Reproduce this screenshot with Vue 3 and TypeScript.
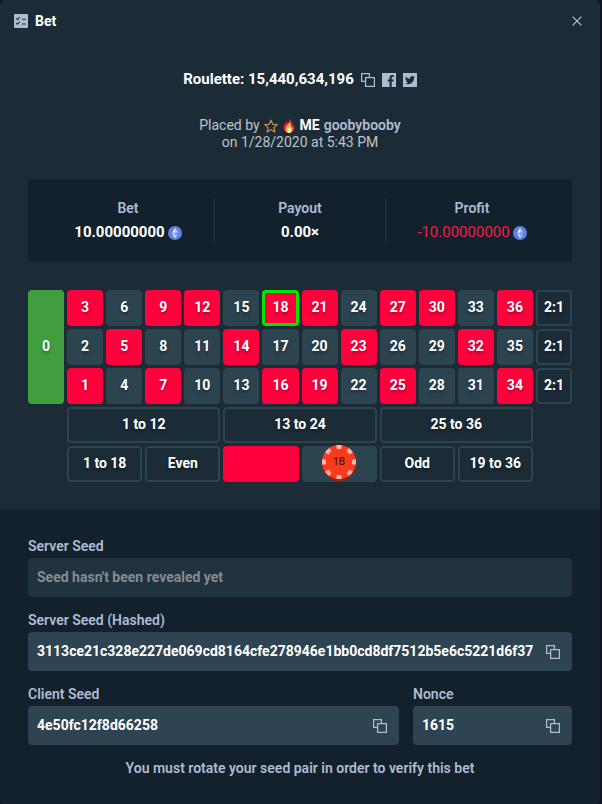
<script setup lang="ts">
import { defineComponent, h } from 'vue'

type Tone = 'red' | 'black'

interface Cell {
  n: number
  tone: Tone
  won: boolean
}

const reds = new Set([1, 3, 5, 7, 9, 12, 14, 16, 18, 19, 21, 23, 25, 27, 30, 32, 34, 36])
const result = 18

const rows: Cell[][] = [3, 2, 1].map((start) =>
  Array.from({ length: 12 }, (_, i) => {
    const n = start + i * 3
    return { n, tone: reds.has(n) ? 'red' : 'black', won: n === result } as Cell
  }),
)

const dozens = ['1 to 12', '13 to 24', '25 to 36']

const CopyIcon = defineComponent({
  render: () =>
    h('svg', { viewBox: '0 0 14 14', width: 14, height: 14, fill: 'none', stroke: 'currentColor', 'stroke-width': 1.25, 'aria-hidden': 'true' }, [
      h('path', { d: 'M4 8.4H.6V.6h7.800V4' }),
      h('rect', { x: 4.6, y: 4.6, width: 8.8, height: 8.8 }),
    ]),
})

const EthIcon = defineComponent({
  render: () =>
    h('svg', { viewBox: '0 0 32 32', width: 14, height: 14, 'aria-hidden': 'true' }, [
      h('circle', { cx: 16, cy: 16, r: 16, fill: '#627eea' }),
      h('path', { d: 'M16.5 4v8.9l7.5 3.3z', fill: '#fff', 'fill-opacity': 0.6 }),
      h('path', { d: 'M16.5 4 9 16.2l7.5-3.3z', fill: '#fff' }),
      h('path', { d: 'M16.5 22v6L24 17.6z', fill: '#fff', 'fill-opacity': 0.6 }),
      h('path', { d: 'M16.5 28v-6L9 17.6z', fill: '#fff' }),
      h('path', { d: 'm16.5 20.6 7.5-4.4-7.5-3.3z', fill: '#fff', 'fill-opacity': 0.2 }),
      h('path', { d: 'm9 16.2 7.5 4.4v-7.7z', fill: '#fff', 'fill-opacity': 0.6 }),
    ]),
})
</script>

<template>
  <main class="modal">
    <header class="head">
      <svg class="muted" viewBox="0 0 14 14" width="14" height="14" aria-hidden="true">
        <rect width="14" height="14" rx="1" fill="currentColor" />
        <path d="M2.2 4.3l1.3 1.3 2.3-2.6M2.2 9l1.3 1.3 2.3-2.6M7.8 5.2h4M7.8 10h4" fill="none" stroke="#1b2c37" stroke-width="1.1" />
      </svg>
      <h1>Bet</h1>
      <button class="icon close" aria-label="Close">
        <svg viewBox="0 0 10 10" width="10" height="10" fill="none" stroke="currentColor" stroke-width="1.3" aria-hidden="true">
          <path d="M.6.6l8.8 8.8M9.4.6L.6 9.4" />
        </svg>
      </button>
    </header>

    <section class="body">
      <div class="title">
        <h2>Roulette: 15,440,634,196</h2>
        <button class="icon" aria-label="Copy bet"><CopyIcon /></button>
        <a class="icon" href="#facebook" aria-label="Facebook">
          <svg viewBox="0 0 14 14" width="14" height="14" aria-hidden="true">
            <path fill="currentColor" d="M0 0h14v14H9.7V8.6h1.8l.3-2.1H9.7V5.1c0-.6.2-1 1-1h1.1V2.2c-.2 0-.9-.1-1.6-.1-1.6 0-2.7 1-2.7 2.8v1.6H5.7v2.1h1.8V14H0z" />
          </svg>
        </a>
        <a class="icon" href="#twitter" aria-label="Twitter">
          <svg viewBox="0 0 14 14" width="14" height="14" aria-hidden="true">
            <rect width="14" height="14" fill="currentColor" />
            <path fill="#1b2c37" d="M12 4.1c-.4.2-.8.3-1.2.3.4-.2.7-.6.9-1.1-.4.2-.8.4-1.3.5a2.05 2.05 0 0 0-3.5 1.9C5.2 5.6 3.7 4.8 2.7 3.5c-.5.9-.3 2.1.6 2.7-.3 0-.6-.1-.9-.2 0 1 .7 1.8 1.6 2-.3.1-.6.1-.9 0 .3.8 1 1.4 1.9 1.4-.9.7-1.9 1-3 .9 3.7 2.3 9-.1 9-5.2.4-.3.8-.7 1-1z" />
          </svg>
        </a>
      </div>

      <p class="placed">
        <span class="who">
          Placed by
          <svg viewBox="0 0 24 24" width="14" height="14" aria-hidden="true">
            <path d="M12 2l3 7 7.6.7-5.7 5 1.7 7.5L12 18.200l-6.600 4 1.700-7.500-5.700-5L9 9z" fill="none" stroke="#d9984f" stroke-width="1.9" stroke-linejoin="round" />
          </svg>
          <svg viewBox="0 0 14 14" width="14" height="14" aria-hidden="true">
            <path d="M7.3 0c.6 2-.6 3-1.7 4.3-.5-.3-.7-.8-.6-1.5C3 4.3 1.5 6.7 1.6 9.2 1.7 12 4 14 7 14s5.4-2 5.4-4.9c0-1.7-.5-2.9-1.2-3.9 0 .7-.2 1.2-.7 1.5C10.6 4.2 9.6 1.5 7.3 0z" fill="#e8203a" />
            <path d="M7.4 3.2c.2 1.6-3.7 3.4-3.7 6.6C3.7 12.4 5.2 14 7 14s3.7-1.4 3.700-3.900c0-1-.3-1.700-.7-2.300-.2.5-.5.8-.9.9.2-2.200-.3-4.200-1.700-5.500z" fill="#ffb636" />
            <path d="M7.2 7.5c0 1.2-1.8 2.2-1.8 4 0 1.5.7 2.5 1.7 2.500s1.900-.8 1.900-2.300c0-1.700-.9-3-1.800-4.200z" fill="#fff6c4" />
          </svg>
          <b>ME</b>
          <a href="#goobybooby">goobybooby</a>
        </span>
        <span>on 1/28/2020 at 5:43 PM</span>
      </p>

      <dl class="stats">
        <div>
          <dt>Bet</dt>
          <dd>10.00000000 <EthIcon /></dd>
        </div>
        <div>
          <dt>Payout</dt>
          <dd>0.00×</dd>
        </div>
        <div>
          <dt>Profit</dt>
          <dd class="loss">-10.00000000 <EthIcon /></dd>
        </div>
      </dl>

      <div class="board">
        <button class="cell zero">0</button>
        <template v-for="(row, r) in rows" :key="r">
          <button v-for="c in row" :key="c.n" class="cell" :class="[c.tone, { won: c.won }]">{{ c.n }}</button>
          <button class="cell line">2:1</button>
        </template>
        <button v-for="(d, i) in dozens" :key="d" class="cell line dozen" :class="{ first: i === 0 }">{{ d }}</button>
        <button class="cell line half first">1 to 18</button>
        <button class="cell line half">Even</button>
        <button class="cell red half" aria-label="Red"></button>
        <button class="cell black half" aria-label="Black">
          <svg class="chip" viewBox="0 0 34 36" width="34" height="36">
            <circle cx="17" cy="19" r="17" fill="#a81f08" />
            <circle cx="17" cy="17" r="17" fill="#fb3a1b" />
            <circle cx="17" cy="17" r="15" fill="none" stroke="#fdb5ab" stroke-width="4" pathLength="80" stroke-dasharray="4.4 5.6" stroke-dashoffset="2.2" />
            <text x="17" y="20" text-anchor="middle">1B</text>
          </svg>
        </button>
        <button class="cell line half">Odd</button>
        <button class="cell line half">19 to 36</button>
      </div>
    </section>

    <section class="seeds">
      <div class="field off">
        <label for="server">Server Seed</label>
        <div class="box"><input id="server" value="Seed hasn't been revealed yet" disabled /></div>
      </div>
      <div class="field">
        <label for="hashed">Server Seed (Hashed)</label>
        <div class="box">
          <input id="hashed" value="3113ce21c328e227de069cd8164cfe278946e1bb0cd8df7512b5e6c5221d6f37" readonly />
          <button class="icon" aria-label="Copy hashed server seed"><CopyIcon /></button>
        </div>
      </div>
      <div class="pair">
        <div class="field">
          <label for="client">Client Seed</label>
          <div class="box">
            <input id="client" value="4e50fc12f8d66258" readonly />
            <button class="icon" aria-label="Copy client seed"><CopyIcon /></button>
          </div>
        </div>
        <div class="field">
          <label for="nonce">Nonce</label>
          <div class="box">
            <input id="nonce" value="1615" readonly />
            <button class="icon" aria-label="Copy nonce"><CopyIcon /></button>
          </div>
        </div>
      </div>
      <p class="note">You must rotate your seed pair in order to verify this bet</p>
    </section>
  </main>
</template>

<style>
body {
  background: #10131f;
}
</style>

<style scoped>
.modal {
  margin-right: 2px;
  border-radius: 5px;
  overflow: hidden;
  background: #1b2c37;
  color: #fff;
  font: 14px/17px Roboto, 'Liberation Sans', sans-serif;
}
.modal * {
  box-sizing: border-box;
}
h1,
h2,
p,
dl,
dd {
  margin: 0;
}
button,
input {
  font: inherit;
  color: inherit;
  border: 0;
  padding: 0;
  background: none;
}
svg {
  display: block;
  flex: none;
}
.muted,
.icon {
  color: #b1bad3;
}
.icon {
  display: flex;
}
.head {
  display: flex;
  align-items: center;
  gap: 7px;
  height: 42px;
  padding: 0 18px 0 14px;
}
h1 {
  font-size: 14px;
  font-weight: 700;
}
.close {
  margin-left: auto;
}
.body {
  display: flex;
  flex-direction: column;
  gap: 28px;
  padding: 28px;
}
.title {
  display: flex;
  align-items: center;
  justify-content: center;
  gap: 7px;
}
h2 {
  font-size: 15px;
  line-height: 19px;
  font-weight: 700;
}
.placed {
  display: flex;
  flex-direction: column;
  align-items: center;
  color: #bfc3c6;
}
.who {
  display: flex;
  align-items: center;
  gap: 4px;
}
.who b {
  color: #fff;
}
.who a {
  color: #b1bad3;
  font-weight: 600;
  text-decoration: none;
}
.stats {
  display: grid;
  grid-template-columns: repeat(3, 1fr);
  padding: 19px 14px;
  border-radius: 3px;
  background: #12212b;
  text-align: center;
}
.stats > div {
  display: flex;
  flex-direction: column;
  gap: 7px;
  padding: 2px 0;
}
.stats > div + div {
  box-shadow: -1px 0 #1b2c37, inset 1px 0 #1b2c37;
}
dt {
  color: #b1bad3;
  font-weight: 600;
}
dd {
  display: flex;
  align-items: center;
  justify-content: center;
  gap: 3px;
  font-size: 15px;
  font-weight: 700;
}
.loss {
  color: #f0204a;
  font-weight: 400;
}
.board {
  display: grid;
  grid-template-columns: repeat(14, minmax(0, 1fr));
  grid-auto-rows: 36px;
  gap: 3px;
}
.cell {
  display: flex;
  align-items: center;
  justify-content: center;
  padding-bottom: 2px;
  border-radius: 4px;
  font-weight: 700;
  text-shadow: 0 2px 3px rgba(0, 0, 0, 0.35);
}
.zero {
  grid-row: span 3;
  background: #419e3f;
}
.red {
  background: #ff003d;
}
.black {
  background: #2c4350;
}
.won {
  border: 3px solid #00e700;
}
.line {
  border: 2px solid #2c4350;
}
.dozen {
  grid-column: span 4;
}
.half {
  grid-column: span 2;
}
.dozen.first {
  grid-column: 2 / span 4;
}
.half.first {
  grid-column: 2 / span 2;
}
.chip text {
  fill: #5e1408;
  font-size: 10px;
  font-weight: 500;
  text-shadow: none;
}
.seeds {
  display: flex;
  flex-direction: column;
  gap: 15px;
  padding: 28px 28px 27px;
  background: #12212b;
  color: #b1bad3;
}
.field {
  display: flex;
  flex-direction: column;
  gap: 3px;
  min-width: 0;
}
label,
.note {
  font-weight: 600;
}
.box {
  display: flex;
  align-items: center;
  gap: 7px;
  height: 39px;
  padding: 0 12px 0 9px;
  border-radius: 4px;
  background: #2f4453;
  color: #fff;
}
.box input {
  flex: 1;
  min-width: 0;
  height: 100%;
  padding-bottom: 2px;
  font-weight: 700;
  outline: 0;
}
.off .box {
  background: #20333e;
  color: #868c90;
}
.pair {
  display: grid;
  grid-template-columns: 7fr 3fr;
  gap: 14px;
}
.note {
  text-align: center;
}
</style>
